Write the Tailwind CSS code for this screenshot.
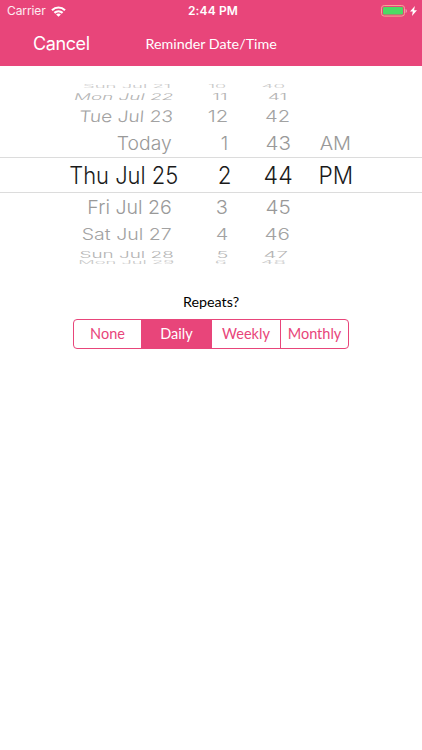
<!DOCTYPE html>
<html lang="en">
<head>
<meta charset="utf-8">
<title>Reminder Date/Time</title>
<script src="https://cdn.jsdelivr.net/npm/@tailwindcss/browser@4"></script>
</head>
<body class="h-[750px] w-[422px] overflow-hidden bg-white font-['Inter',sans-serif]">
<header class="h-[66px] bg-[#e8457a] text-white">
  <div class="grid h-[22px] grid-cols-3 items-center pl-[7px] pr-[5px]">
    <div class="flex items-center gap-[5px] text-[12px] tracking-[-0.1px] text-white/90">
      <span>Carrier</span>
      <svg class="h-[11px] w-[15px]" viewBox="0 0 15 11" fill="none" stroke="white" stroke-width="2.2"><path d="M1 4.2C4.8.6 10.2.6 14 4.2M3.4 6.9c2.4-2.2 5.8-2.2 8.2 0"/><path d="M7.5 10.8 5.1 8.4c1.3-1.1 3.5-1.1 4.8 0z" fill="white" stroke="none"/></svg>
    </div>
    <div class="pl-[2px] text-center text-[12px] font-semibold tracking-[0.15px]">2:44 PM</div>
    <div class="flex items-center justify-end gap-[3px]">
      <svg class="h-[12px] w-[27px]" viewBox="0 0 27 12"><rect x="1.5" y=".5" width="23" height="10.6" rx="2.7" fill="none" stroke="#f3a596"/><rect x="3" y="2" width="20" height="7.6" rx="1.3" fill="#4cd964"/><path d="M25.6 4v4c1.6-.6 1.6-3.4 0-4z" fill="#f4a0bb"/></svg>
      <svg class="h-[10px] w-[7px]" viewBox="0 0 6 10" preserveAspectRatio="none" fill="white"><path d="M4.2 0 0 5.6h2.4L1.7 10 6 4.2H3.5z"/></svg>
    </div>
  </div>
  <div class="flex h-[44px] items-center pl-[33px]">
    <span class="w-[112.5px] -mt-px text-[18px] tracking-[-0.4px]">Cancel</span>
    <span class="font-['Lato',sans-serif] text-[14.3px]">Reminder Date/Time</span>
  </div>
</header>
<main>
  <section class="pt-[18px] text-[21px] font-light leading-[24px] whitespace-nowrap text-[#999999]">
    <div class="grid h-[4px] grid-cols-[178px_53px_62px_60px] items-center overflow-hidden text-[#c9c9c9]">
      <span class="-my-3 origin-right justify-self-end mr-[7px] scale-x-[0.88] scale-y-[0.22]">Sun Jul 21</span>
      <span class="-my-3 origin-right justify-self-end mr-[5px] scale-x-[0.86] scale-y-[0.22]">10</span>
      <span class="-my-3 origin-right justify-self-end mr-[8px] scale-x-[0.9] scale-y-[0.22]">40</span>
    </div>
    <div class="grid h-[17px] grid-cols-[178px_53px_62px_60px] items-center text-[#b4b4b4]">
      <span class="-my-3 origin-right justify-self-end mr-[5px] [transform:scale(0.9,0.44)_skewX(-8deg)]">Mon Jul 22</span>
      <span class="-my-3 origin-right justify-self-end mr-[3px] scale-x-[0.92] scale-y-[0.44]">11</span>
      <span class="-my-3 origin-right justify-self-end mr-[6px] scale-x-[0.92] scale-y-[0.44]">41</span>
    </div>
    <div class="grid h-[23px] grid-cols-[178px_53px_62px_60px] items-center text-[#a2a2a2]">
      <span class="origin-right justify-self-end mr-[5px] [transform:scale(0.91,0.76)_skewX(-4deg)]">Tue Jul 23</span>
      <span class="origin-right justify-self-end mr-[3px] scale-x-[0.97] scale-y-[0.76]">12</span>
      <span class="origin-right justify-self-end mr-[3px] scale-x-[0.96] scale-y-[0.76]">42</span>
    </div>
    <div class="grid h-[29px] grid-cols-[178px_53px_62px_60px] items-center pt-[2px]">
      <span class="origin-right justify-self-end mr-[6px] scale-x-[0.92] scale-y-[0.88]">Today</span>
      <span class="origin-right justify-self-end mr-[3px] scale-x-[0.9] scale-y-[0.88]">1</span>
      <span class="origin-right justify-self-end mr-[2px] scale-x-[0.98] scale-y-[0.88]">43</span>
      <span class="origin-right justify-self-end mr-[2px] scale-x-[0.95] scale-y-[0.88]">AM</span>
    </div>
    <div class="grid h-[36px] grid-cols-[178px_53px_62px_60px] items-center border-y border-[#dcdcdc] pt-px text-[23.6px] text-[#1a1a1a]">
      <span class="origin-right justify-self-end scale-x-[0.93]">Thu Jul 25</span>
      <span class="origin-right justify-self-end scale-x-[0.95]">2</span>
      <span class="origin-right justify-self-end scale-x-[0.98]">44</span>
      <span class="origin-right justify-self-end scale-x-[0.96]">PM</span>
    </div>
    <div class="grid h-[29px] grid-cols-[178px_53px_62px_60px] items-center pt-px">
      <span class="origin-right justify-self-end mr-[6px] scale-x-[0.93] scale-y-[0.89]">Fri Jul 26</span>
      <span class="origin-right justify-self-end mr-[3px] scale-x-[0.95] scale-y-[0.89]">3</span>
      <span class="origin-right justify-self-end mr-[2px] scale-x-[0.98] scale-y-[0.89]">45</span>
    </div>
    <div class="grid h-[26px] grid-cols-[178px_53px_62px_60px] items-center text-[#a2a2a2]">
      <span class="origin-right justify-self-end mr-[6px] scale-x-[0.93] scale-y-[0.74]">Sat Jul 27</span>
      <span class="origin-right justify-self-end mr-[3px] scale-x-[0.95] scale-y-[0.74]">4</span>
      <span class="origin-right justify-self-end mr-[3px] scale-x-[0.98] scale-y-[0.74]">46</span>
    </div>
    <div class="grid h-[13px] grid-cols-[178px_53px_62px_60px] items-center text-[#b4b4b4]">
      <span class="-my-3 origin-right justify-self-end mr-[4px] scale-x-[0.9] scale-y-[0.44]">Sun Jul 28</span>
      <span class="-my-3 origin-right justify-self-end mr-[3px] scale-x-[0.95] scale-y-[0.44]">5</span>
      <span class="-my-3 origin-right justify-self-end mr-[5px] scale-x-[0.98] scale-y-[0.44]">47</span>
    </div>
    <div class="grid h-[4px] grid-cols-[178px_53px_62px_60px] items-center text-[#c9c9c9]">
      <span class="-my-3 origin-right justify-self-end mr-[4px] scale-x-[0.87] scale-y-[0.2]">Mon Jul 29</span>
      <span class="-my-3 origin-right justify-self-end mr-[4px] scale-x-[0.95] scale-y-[0.2]">6</span>
      <span class="-my-3 origin-right justify-self-end mr-[7px] scale-x-[0.97] scale-y-[0.2]">48</span>
    </div>
  </section>
  <section class="flex flex-col items-center pt-[27px] font-['Lato',sans-serif]">
    <h2 class="h-[27px] text-[14.3px] leading-[20px] text-black">Repeats?</h2>
    <div class="grid h-[30px] w-[276px] grid-cols-[68px_70px_69px_67px] divide-x divide-[#e8457a] overflow-hidden rounded-[4px] border border-[#e8457a] text-center text-[14.5px] leading-[28px] text-[#e8457a]">
      <button>None</button>
      <button class="bg-[#e8457a] text-white">Daily</button>
      <button>Weekly</button>
      <button>Monthly</button>
    </div>
  </section>
</main>
</body>
</html>
